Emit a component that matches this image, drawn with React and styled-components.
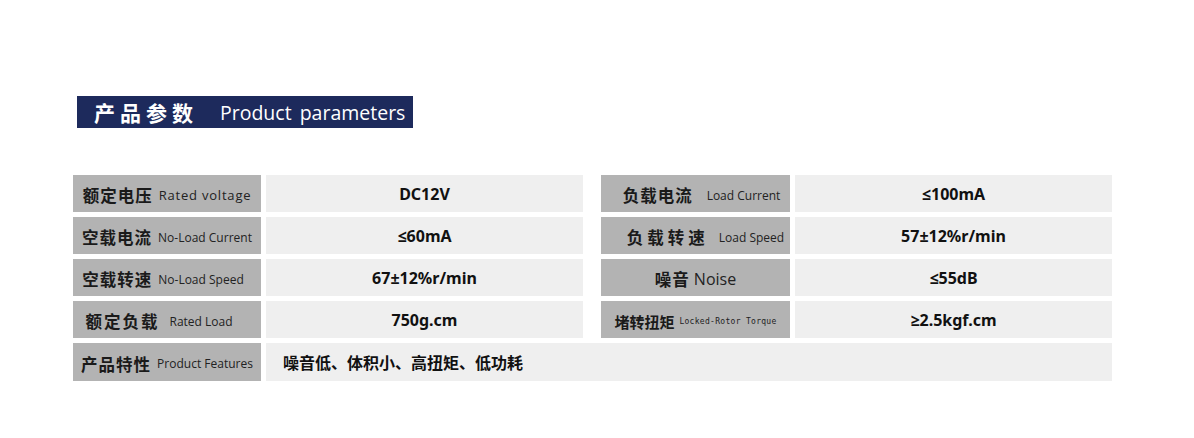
import React from "react";
import styled, { createGlobalStyle } from "styled-components";

const GlobalStyle = createGlobalStyle`
  body {
    margin: 0;
    background: #ffffff;
    font-family: "Noto Sans", "Noto Sans CJK SC", sans-serif;
  }
`;

const Page = styled.div`
  width: 1194px;
  height: 438px;
  padding: 96px 0 0 73px;
  box-sizing: border-box;
`;

const TitleBar = styled.div`
  display: inline-flex;
  align-items: center;
  height: 32px;
  width: 336px;
  box-sizing: border-box;
  margin-left: 4px;
  padding-left: 17px;
  background: #1d2a5c;
  color: #ffffff;
`;

const TitleCn = styled.span`
  font-family: "Noto Sans CJK SC", sans-serif;
  font-weight: 700;
  font-size: 21px;
  letter-spacing: 5px;
`;

const TitleEn = styled.span`
  font-family: "Open Sans", "Noto Sans", sans-serif;
  font-size: 19.5px;
  font-weight: 400;
  margin-left: 22px;
  word-spacing: 3px;
`;

const Table = styled.div`
  display: grid;
  grid-template-columns: 188px 317px 202px 317px;
  grid-template-rows: repeat(4, 37px) 38px;
  column-gap: 5px;
  row-gap: 5px;
  margin-top: 47px;
`;

const Label = styled.div`
  display: flex;
  align-items: center;
  justify-content: center;
  gap: ${(p) => p.$gap || 6}px;
  padding-top: 3px;
  padding-right: ${(p) => p.$pr || 0}px;
  padding-left: ${(p) => p.$pl || 0}px;
  margin-left: ${(p) => (p.$right ? 13 : 0)}px;
  background: #b3b3b3;
  color: #1a1a1a;
  box-sizing: border-box;
  white-space: nowrap;
`;

const LabelCn = styled.span`
  font-family: "Noto Sans CJK SC", sans-serif;
  font-weight: 700;
  font-size: ${(p) => p.$size || 16.5}px;
  letter-spacing: ${(p) => p.$ls ?? 1}px;
`;

const LabelEn = styled.span`
  font-family: ${(p) => (p.$mono ? '"DejaVu Sans Mono", monospace' : '"Open Sans", "Noto Sans", sans-serif')};
  font-size: ${(p) => p.$size || 12}px;
  letter-spacing: ${(p) => p.$ls || 0}px;
  color: #222;
`;

const Value = styled.div`
  display: flex;
  align-items: center;
  justify-content: ${(p) => (p.$wide ? "flex-start" : "center")};
  padding-left: ${(p) => (p.$wide ? 17 : 0)}px;
  grid-column: ${(p) => (p.$wide ? "2 / 5" : "auto")};
  background: #efefef;
  color: #111;
  font-family: ${(p) => (p.$wide ? '"Noto Sans CJK SC", sans-serif' : '"Noto Sans", "Open Sans", sans-serif')};
  font-weight: 700;
  font-size: 16px;
  white-space: nowrap;
`;

const rows = [
  {
    left: { cn: "额定电压", en: "Rated voltage", size: 13, ls: 0.8, value: "DC12V" },
    right: { cn: "负载电流", en: "Load Current", value: "≤100mA", gap: 14, pl: 12 },
  },
  {
    left: { cn: "空载电流", en: "No-Load Current", value: "≤60mA" },
    right: { cn: "负载转速", en: "Load Speed", value: "57±12%r/min", cls: 4, gap: 10, pl: 20 },
  },
  {
    left: { cn: "空载转速", en: "No-Load Speed", value: "67±12%r/min", pr: 8 },
    right: { cn: "噪音", en: "Noise", size: 16, value: "≤55dB", gap: 4 },
  },
  {
    left: { cn: "额定负载", en: "Rated Load", value: "750g.cm", cls: 2, gap: 10, pr: 16 },
    right: {
      cn: "堵转扭矩",
      csize: 15,
      cls: 0,
      en: "Locked-Rotor Torque",
      size: 8,
      ls: 0.3,
      mono: true,
      value: "≥2.5kgf.cm",
      gap: 5,
    },
  },
];

function Cell({ item, right }) {
  return (
    <>
      <Label $right={right} $gap={item.gap} $pr={item.pr} $pl={item.pl}>
        <LabelCn $ls={item.cls} $size={item.csize}>
          {item.cn}
        </LabelCn>
        <LabelEn $size={item.size} $ls={item.ls} $mono={item.mono}>
          {item.en}
        </LabelEn>
      </Label>
      <Value>{item.value}</Value>
    </>
  );
}

export default function App() {
  return (
    <Page>
      <GlobalStyle />
      <TitleBar>
        <TitleCn>产品参数</TitleCn>
        <TitleEn>Product parameters</TitleEn>
      </TitleBar>
      <Table>
        {rows.map((r, i) => (
          <React.Fragment key={i}>
            <Cell item={r.left} />
            <Cell item={r.right} right />
          </React.Fragment>
        ))}
        <Label>
          <LabelCn>产品特性</LabelCn>
          <LabelEn>Product Features</LabelEn>
        </Label>
        <Value $wide>噪音低、体积小、高扭矩、低功耗</Value>
      </Table>
    </Page>
  );
}
